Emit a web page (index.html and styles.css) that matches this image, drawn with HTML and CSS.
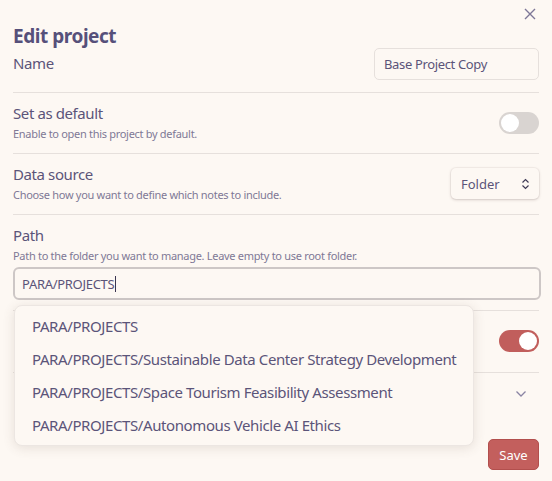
FILE: index.html
```html
<!DOCTYPE html>
<html>
<head>
<meta charset="utf-8">
<link rel="stylesheet" href="styles.css">
</head>
<body>
<div class="modal">
  <button class="close" aria-label="Close">
    <svg width="12" height="12" viewBox="0 0 12 12"><path d="M1 1L11 11M11 1L1 11" stroke="#7d7797" stroke-width="1.4" fill="none"/></svg>
  </button>
  <h1 class="title">Edit project</h1>

  <div class="item first">
    <div class="info"><div class="name">Name</div></div>
    <div class="control"><input class="text" type="text" value="Base Project Copy"></div>
  </div>

  <div class="item">
    <div class="info">
      <div class="name">Set as default</div>
      <div class="desc">Enable to open this project by default.</div>
    </div>
    <div class="control"><div class="toggle"><span class="knob"></span></div></div>
  </div>

  <div class="item">
    <div class="info">
      <div class="name">Data source</div>
      <div class="desc">Choose how you want to define which notes to include.</div>
    </div>
    <div class="control">
      <div class="select">Folder
        <svg width="9" height="12" viewBox="0 0 9 12"><path d="M1.5 4.5L4.5 1.5L7.5 4.5M1.5 7.5L4.5 10.5L7.5 7.5" stroke="#3f3a55" stroke-width="1.2" fill="none"/></svg>
      </div>
    </div>
  </div>

  <div class="item stacked">
    <div class="info">
      <div class="name">Path</div>
      <div class="desc">Path to the folder you want to manage. Leave empty to use root folder.</div>
    </div>
    <div class="path-input">PARA/PROJECTS<span class="caret"></span></div>
  </div>

  <div class="item tall">
    <div class="info"></div>
    <div class="control"><div class="toggle on"><span class="knob"></span></div></div>
  </div>

  <div class="item collapse">
    <div class="info"></div>
    <div class="control">
      <svg width="12" height="8" viewBox="0 0 12 8"><path d="M1.5 1.5L6 6L10.5 1.5" stroke="#8a84a3" stroke-width="1.3" fill="none"/></svg>
    </div>
  </div>

  <div class="footer"><button class="save">Save</button></div>

  <div class="suggest">
    <div class="opt">PARA/PROJECTS</div>
    <div class="opt">PARA/PROJECTS/Sustainable Data Center Strategy Development</div>
    <div class="opt">PARA/PROJECTS/Space Tourism Feasibility Assessment</div>
    <div class="opt">PARA/PROJECTS/Autonomous Vehicle AI Ethics</div>
  </div>
</div>
</body>
</html>
```

FILE: styles.css
```css
* { box-sizing: border-box; }
html, body { margin: 0; padding: 0; background: #fdf8f3; }
body {
  font-family: "Noto Sans", "Open Sans", sans-serif;
  color: #5b5479;
  width: 552px;
  height: 481px;
  overflow: hidden;
}
.modal {
  position: relative;
  padding: 24px 13px 0 13px;
}
.close {
  position: absolute;
  top: 7px;
  right: 15px;
  width: 14px;
  height: 14px;
  padding: 0;
  border: 0;
  background: none;
  display: flex;
  align-items: center;
  justify-content: center;
}
.title {
  margin: 0;
  font-size: 19px;
  line-height: 24px;
  font-weight: 700;
  letter-spacing: -0.45px;
  color: #56507a;
}
.item {
  display: flex;
  align-items: center;
  justify-content: space-between;
  gap: 16px;
  padding: 11px 0 12px;
  border-top: 1px solid #e6e0dc;
}
.item.first { border-top: 0; padding-top: 0; padding-bottom: 12px; }
.item.first .info { align-self: flex-start; padding-top: 6px; }
.item.stacked { display: block; padding-bottom: 10px; }
.item.tall { min-height: 62px; }
.info { flex: 1; min-width: 0; }
.name { font-size: 15px; line-height: 18px; letter-spacing: -0.4px; color: #5b5479; }
.desc { font-size: 11px; line-height: 14px; margin-top: 5px; letter-spacing: -0.3px; color: #7f7896; }
.control { display: flex; align-items: center; }
input.text {
  width: 165px;
  height: 32px;
  border: 1px solid #e6e0dc;
  border-radius: 5px;
  background: #fdf8f3;
  font-family: inherit;
  font-size: 13px;
  letter-spacing: -0.35px;
  color: #5b5479;
  padding: 0 9px;
  outline: none;
}
.toggle {
  width: 40px;
  height: 22px;
  border-radius: 11px;
  background: #d9d4d1;
  position: relative;
}
.toggle .knob {
  position: absolute;
  top: 2px;
  left: 2px;
  width: 18px;
  height: 18px;
  border-radius: 50%;
  background: #fff;
}
.toggle.on { background: #c15e5c; }
.toggle.on .knob { left: 20px; }
.select {
  width: 88px;
  height: 31px;
  border-radius: 5px;
  background: #fdf8f3;
  box-shadow: 0 1px 3px rgba(80, 60, 60, 0.22), 0 0 0 1px rgba(120, 100, 100, 0.06);
  display: flex;
  align-items: center;
  justify-content: space-between;
  padding: 0 9px 0 10px;
  font-size: 13px;
  color: #5b5479;
}
.path-input {
  margin-top: 4px;
  height: 33px;
  border: 2px solid #cdc7c6;
  border-radius: 6px;
  padding: 0 7px;
  display: flex;
  align-items: center;
  font-size: 13px;
  letter-spacing: -0.3px;
  color: #5b5479;
  width: 528px;
}
.caret {
  display: inline-block;
  width: 1px;
  height: 16px;
  background: #3b3550;
  margin-left: 1px;
}
.collapse { padding: 10px 0; min-height: 42px; }
.collapse .control { padding-right: 12px; }
.footer {
  display: flex;
  justify-content: flex-end;
  padding-top: 25px;
}
.save {
  width: 51px;
  height: 31px;
  border-radius: 5px;
  background: #c35f5d;
  border: 1px solid #b24f4d;
  color: #fff;
  font-family: inherit;
  font-size: 13px;
  padding: 0;
}
.suggest {
  position: absolute;
  left: 14px;
  top: 305px;
  width: 460px;
  height: 141px;
  background: #fdf8f3;
  border: 1px solid #ece6e2;
  border-radius: 8px;
  box-shadow: 0 2px 12px rgba(90, 70, 60, 0.14);
  padding: 4px 0;
}
.opt {
  height: 33px;
  line-height: 33px;
  padding-left: 17px;
  font-size: 15px;
  letter-spacing: -0.4px;
  color: #5b5479;
  white-space: nowrap;
}
```
